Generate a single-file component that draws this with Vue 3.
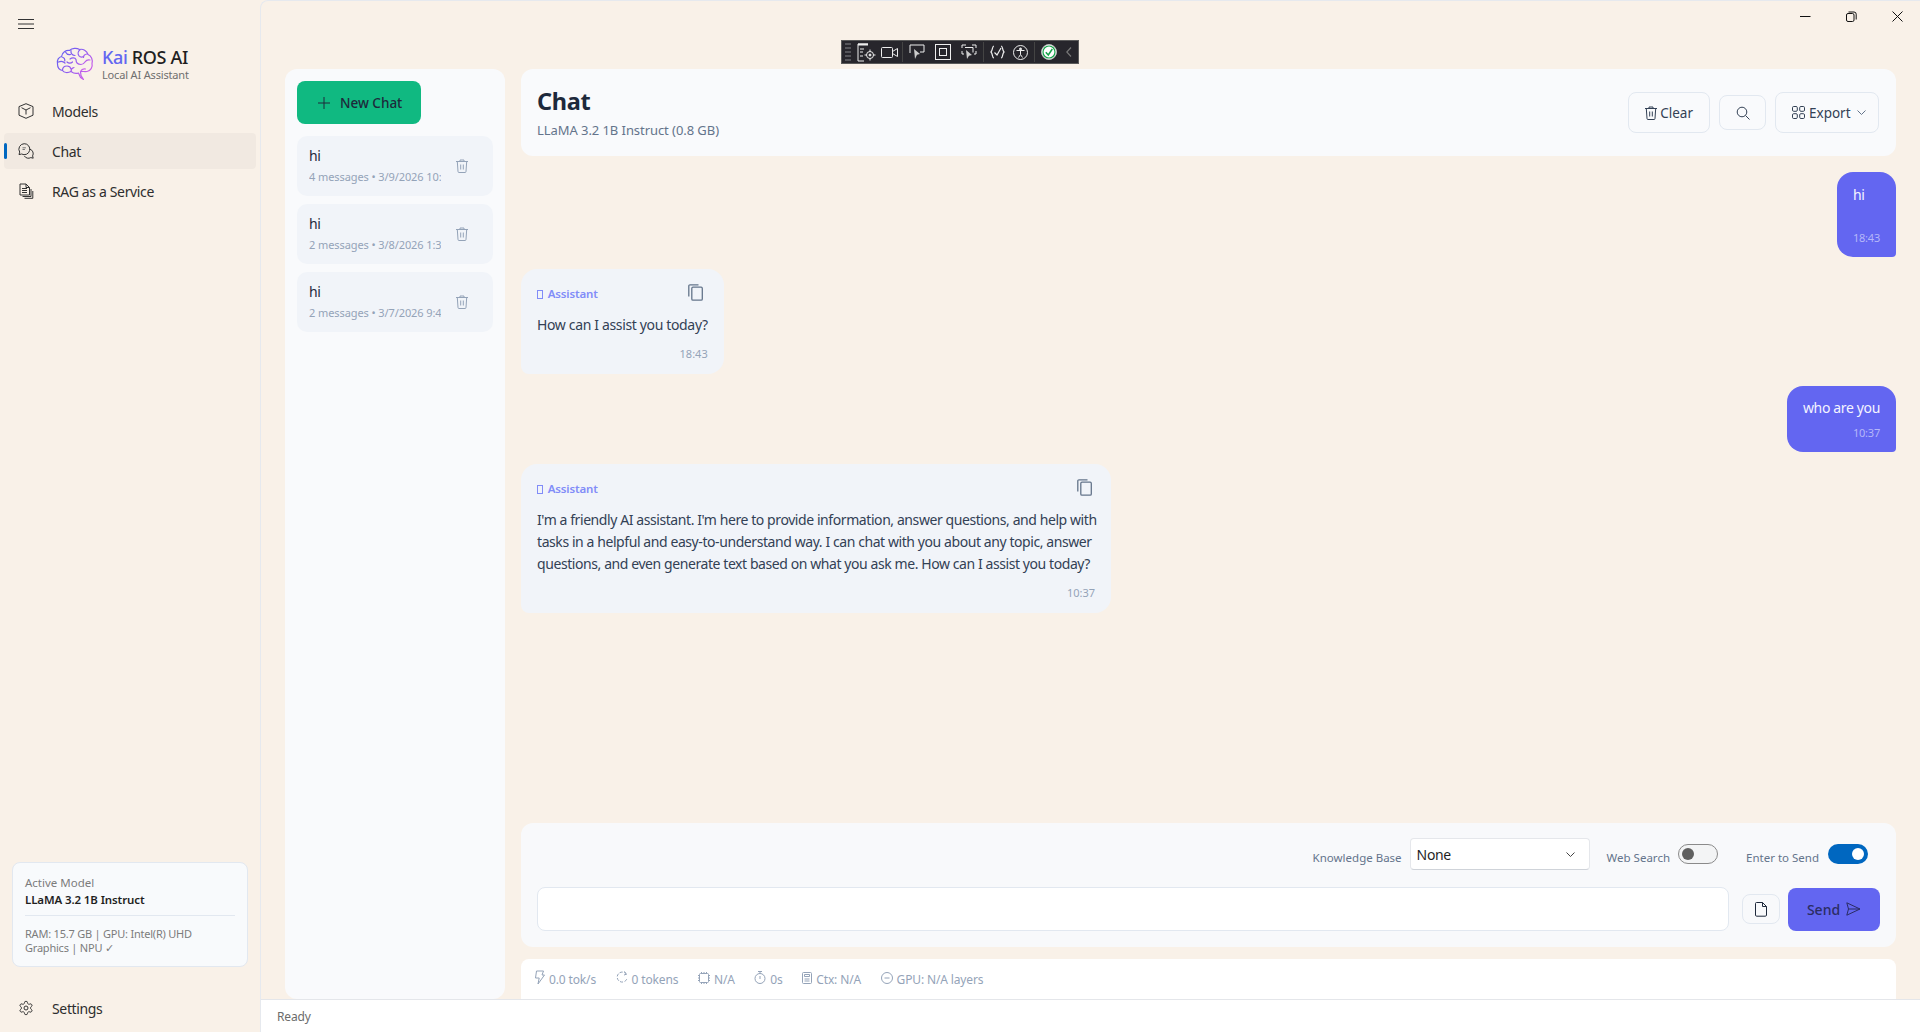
<script setup>
const sessions = [
  { id: 1, title: 'hi', meta: '4 messages • 3/9/2026 10:37 AM' },
  { id: 2, title: 'hi', meta: '2 messages • 3/8/2026 1:30 PM' },
  { id: 3, title: 'hi', meta: '2 messages • 3/7/2026 9:43 AM' },
]
</script>

<template>
  <div class="app">
    <aside class="sidebar">
      <button class="menu-btn" aria-label="Menu">
        <svg width="16" height="12" viewBox="0 0 16 12" fill="none" stroke="#333" stroke-width="1"><path d="M0 1.5h16M0 6h16M0 10.5h16"/></svg>
      </button>
      <div class="brand">
        <svg class="brain" width="38" height="34" viewBox="0 0 38 34" fill="none" stroke-width="1.2" stroke-linecap="round" stroke-linejoin="round">
          <defs>
            <linearGradient id="bg" x1="0" y1="0" x2="1" y2="0.7">
              <stop offset="0" stop-color="#5f63f2"/><stop offset="0.55" stop-color="#8e5cf0"/><stop offset="1" stop-color="#d060ea"/>
            </linearGradient>
          </defs>
          <path stroke="url(#bg)" d="M1.5 17C.5 13 3 10 5.5 9.500 6 5.500 10 3 13.500 3.500 16 .8 21 .8 23.500 2.500 27 1.500 31 4 32 7.500 35.500 9 37 13 36 16.500 37 20 34.500 24 31 24.500 28 25 26.500 24 24.500 24.500L25 28.500 27.500 32.500 24.500 30.500 22.500 26C20 27 17 26 15 24.500 12 26 8 26 6.500 23.500 3.500 23 1.500 20.500 1.500 17Z"/>
          <path stroke="url(#bg)" d="M6 10c2 .5 3 2 2.800 4M2.500 15c2-1 5-.5 6.500 1M9.500 5c1 2 3 3 5 2.500M14 12c2-1.500 5-1.500 6 .5M15 3.500c-.5 3 1.500 5 4 5M24 2.800c-2 1.500-2.500 4-1 6 1.500 1.800 4 1.500 5 0M31 7c-2 .3-3.500 1.500-3.500 3.500M20 12.500c0 3 2 5 5 5 2 0 3-1 4-2.500M34 13c-2-.5-4 .5-5 2M6.500 23.500c0-3 2-4.500 4.500-4.500 2 0 3.500 1 4 3M15 24.500c0-2 1-3.500 3-4M24.500 24.500c1-2 3-3 5-2.500M11 15c1.500 1.500 4 1.500 5.500 0"/>
        </svg>
        <div class="brand-text">
          <div class="brand-title"><span class="kai">Kai</span> ROS AI</div>
          <div class="brand-sub">Local AI Assistant</div>
        </div>
      </div>
      <nav class="nav">
        <a class="nav-item">
          <svg class="nav-icon" width="16" height="16" viewBox="0 0 16 16" fill="none" stroke="#333" stroke-width="1" stroke-linejoin="round"><path d="M8 .7l7 2.900v8.600l-7 3.100-7-3.100V3.600z"/><path d="M3.500 4.700L8 7l4.500-2.300M8 7v4.500"/></svg>
          <span>Models</span>
        </a>
        <a class="nav-item active">
          <span class="indicator"></span>
          <svg class="nav-icon" width="16" height="16" viewBox="0 0 16 16" fill="none" stroke="#333" stroke-width="1" stroke-linejoin="round"><path d="M6.200.7a5.500 5.500 0 1 1-2.600 10.300L1 11.600l.7-2.500A5.500 5.500 0 0 1 6.200.7z"/><path d="M11.900 6.200a4.600 4.600 0 0 1 2.700 6.700l.6 2.300-2.400-.6a4.700 4.700 0 0 1-6.400-1.600"/><path d="M4.500 4.800h3.400M4.500 6.500h2.400" stroke="#777"/></svg>
          <span>Chat</span>
        </a>
        <a class="nav-item">
          <svg class="nav-icon" width="16" height="16" viewBox="0 0 16 16" fill="none" stroke="#333" stroke-width="1" stroke-linejoin="round"><path d="M2 1h6l3.500 3.500V12H2z"/><path d="M8 1v3.500h3.500M4 5.500h5M4 7.500h5M4 9.500h5M13 6v7.500H4.500M14.800 8v7.300H6.500"/></svg>
          <span>RAG as a Service</span>
        </a>
      </nav>
      <div class="spacer"></div>
      <div class="model-card">
        <div class="mc-label">Active Model</div>
        <div class="mc-name">LLaMA 3.2 1B Instruct</div>
        <div class="mc-divider"></div>
        <div class="mc-info">RAM: 15.7 GB | GPU: Intel(R) UHD Graphics | NPU ✓</div>
      </div>
      <a class="nav-item settings">
        <svg class="nav-icon" width="16" height="16" viewBox="0 0 24 24" fill="none" stroke="#333" stroke-width="1.500"><path d="M12.220 2h-.44a2 2 0 0 0-2 2v.18a2 2 0 0 1-1 1.730l-.43.25a2 2 0 0 1-2 0l-.15-.08a2 2 0 0 0-2.730.73l-.22.38a2 2 0 0 0 .73 2.730l.15.1a2 2 0 0 1 1 1.720v.51a2 2 0 0 1-1 1.740l-.15.09a2 2 0 0 0-.73 2.730l.22.38a2 2 0 0 0 2.730.73l.15-.08a2 2 0 0 1 2 0l.43.25a2 2 0 0 1 1 1.730V20a2 2 0 0 0 2 2h.44a2 2 0 0 0 2-2v-.18a2 2 0 0 1 1-1.730l.43-.25a2 2 0 0 1 2 0l.15.08a2 2 0 0 0 2.730-.73l.22-.39a2 2 0 0 0-.73-2.730l-.15-.08a2 2 0 0 1-1-1.740v-.5a2 2 0 0 1 1-1.740l.15-.09a2 2 0 0 0 .73-2.730l-.22-.38a2 2 0 0 0-2.730-.73l-.15.08a2 2 0 0 1-2 0l-.43-.25a2 2 0 0 1-1-1.730V4a2 2 0 0 0-2-2z"/><circle cx="12" cy="12" r="3"/></svg>
        <span>Settings</span>
      </a>
    </aside>

    <main class="main">
      <div class="titlebar">
        <button class="win-btn" aria-label="Minimize"><svg width="11" height="11" viewBox="0 0 11 11" stroke="#111" fill="none"><path d="M0 5.500h10.500"/></svg></button>
        <button class="win-btn" aria-label="Restore"><svg width="11" height="11" viewBox="0 0 11 11" stroke="#111" fill="none"><rect x=".5" y="2.500" width="7.500" height="8" rx="1.500"/><path d="M2.500 1h5.500a2.200 2.200 0 0 1 2.200 2.200V8.500"/></svg></button>
        <button class="win-btn" aria-label="Close"><svg width="11" height="11" viewBox="0 0 11 11" stroke="#111" fill="none"><path d="M.5.500l10 10M10.500.500l-10 10"/></svg></button>
      </div>

      <div class="content">
        <section class="history">
          <button class="new-chat">
            <svg width="12" height="12" viewBox="0 0 12 12" stroke="#1e293b" fill="none"><path d="M6 0v12M0 6h12"/></svg>
            <span>New Chat</span>
          </button>
          <div v-for="s in sessions" :key="s.id" class="session">
            <div class="session-text">
              <div class="session-title">{{ s.title }}</div>
              <div class="session-meta">{{ s.meta }}</div>
            </div>
            <svg class="session-del" width="14" height="14" viewBox="0 0 14 14" fill="none" stroke="#94a3b8" stroke-width="1"><path d="M1 2.500h12M5 2.500V1h4v1.500M2.300 2.500l.7 10a1 1 0 0 0 1 1h6a1 1 0 0 0 1-1l.7-10M5.700 5.500v5M8.300 5.500v5"/></svg>
          </div>
        </section>

        <section class="chat">
          <header class="chat-header">
            <div class="chat-head-text">
              <h1>Chat</h1>
              <p>LLaMA 3.2 1B Instruct (0.8 GB)</p>
            </div>
            <div class="chat-actions">
              <button class="tool-btn clear">
                <svg width="14" height="14" viewBox="0 0 14 14" fill="none" stroke="#334155" stroke-width="1"><path d="M1 2.500h12M5 2.500V1h4v1.500M2.300 2.500l.7 10a1 1 0 0 0 1 1h6a1 1 0 0 0 1-1l.7-10M5.700 5.500v5M8.300 5.500v5"/></svg>
                <span>Clear</span>
              </button>
              <button class="tool-btn icon-only">
                <svg width="14" height="14" viewBox="0 0 14 14" fill="none" stroke="#334155" stroke-width="1"><circle cx="6" cy="6" r="4.800"/><path d="M9.500 9.500l4 4"/></svg>
              </button>
              <button class="tool-btn export">
                <svg width="13" height="13" viewBox="0 0 13 13" fill="none" stroke="#334155" stroke-width="1"><rect x=".5" y=".5" width="4.800" height="4.800" rx="1.200"/><rect x="7.700" y=".5" width="4.800" height="4.800" rx="1.200"/><rect x=".5" y="7.700" width="4.800" height="4.800" rx="1.200"/><rect x="7.700" y="7.700" width="4.800" height="4.800" rx="1.200"/></svg>
                <span>Export</span>
                <svg class="chev" width="9" height="5" viewBox="0 0 9 5" fill="none" stroke="#64748b"><path d="M.5.500l4 4 4-4"/></svg>
              </button>
            </div>
          </header>

          <div class="messages">
            <div class="bubble user tall">
              <div class="msg-text">hi</div>
              <div class="msg-time">18:43</div>
            </div>
            <div class="bubble bot">
              <div class="bot-head">
                <span class="bot-label"><i class="tofu"></i> Assistant</span>
                <svg class="copy" width="15" height="17" viewBox="0 0 15 17" fill="none" stroke="#64748b" stroke-width="1.300"><rect x="3.800" y="3.200" width="10.500" height="13" rx="1.200"/><path d="M.8 12.500V2A1.200 1.200 0 0 1 2 .8h8.500"/></svg>
              </div>
              <div class="msg-text">How can I assist you today?</div>
              <div class="msg-time">18:43</div>
            </div>
            <div class="bubble user">
              <div class="msg-text">who are you</div>
              <div class="msg-time">10:37</div>
            </div>
            <div class="bubble bot wide">
              <div class="bot-head">
                <span class="bot-label"><i class="tofu"></i> Assistant</span>
                <svg class="copy" width="15" height="17" viewBox="0 0 15 17" fill="none" stroke="#64748b" stroke-width="1.300"><rect x="3.800" y="3.200" width="10.500" height="13" rx="1.200"/><path d="M.8 12.500V2A1.200 1.200 0 0 1 2 .8h8.500"/></svg>
              </div>
              <div class="msg-text">I'm a friendly AI assistant. I'm here to provide information, answer questions, and help with tasks in a helpful and easy-to-understand way. I can chat with you about any topic, answer questions, and even generate text based on what you ask me. How can I assist you today?</div>
              <div class="msg-time">10:37</div>
            </div>
          </div>

          <div class="composer">
            <div class="options">
              <label class="opt-label">Knowledge Base</label>
              <div class="select">
                <span>None</span>
                <svg width="9" height="5" viewBox="0 0 9 5" fill="none" stroke="#444"><path d="M.5.500l4 4 4-4"/></svg>
              </div>
              <label class="opt-label ws">Web Search</label>
              <span class="toggle off"><i></i></span>
              <label class="opt-label es">Enter to Send</label>
              <span class="toggle on"><i></i></span>
            </div>
            <div class="input-row">
              <div class="text-input"></div>
              <button class="attach">
                <svg width="12" height="15" viewBox="0 0 12 15" fill="none" stroke="#1e293b" stroke-width="1"><path d="M1.500.5h6l4 4v8.500a1.200 1.200 0 0 1-1.200 1.200H1.700A1.200 1.200 0 0 1 .5 13V1.500a1 1 0 0 1 1-1z"/><path d="M7.500.5v4h4" /></svg>
              </button>
              <button class="send">
                <span>Send</span>
                <svg width="15" height="14" viewBox="0 0 15 14" fill="none" stroke="#2b2d63" stroke-width="1"><path d="M.8.800L14 7 .8 13.200 2.500 7zM2.500 7H14"/></svg>
              </button>
            </div>
          </div>

          <div class="stats">
            <span class="stat"><svg width="11" height="15" viewBox="0 0 11 15" fill="none" stroke="#94a3b8"><path d="M2.500 1h7L8 5h2.500L4 14l1.200-6H1.500z"/></svg>0.0 tok/s</span>
            <span class="stat"><svg width="12" height="13" viewBox="0 0 12 13" fill="none" stroke="#94a3b8" stroke-dasharray="3 1.500"><path d="M10.500 3.500A5 5 0 1 0 11 7.500M8 .5l3 2.500-3 1"/></svg>0 tokens</span>
            <span class="stat"><svg width="12" height="12" viewBox="0 0 12 12" fill="none" stroke="#94a3b8"><rect x="1.500" y="1.500" width="9" height="9" rx="1"/><path d="M3.500 0v1.500M6 0v1.500M8.500 0v1.500M3.500 10.500V12M6 10.500V12M8.500 10.500V12M0 3.500h1.500M0 6h1.500M0 8.500h1.500M10.500 3.500H12M10.500 6H12M10.500 8.500H12"/></svg>N/A</span>
            <span class="stat"><svg width="12" height="13" viewBox="0 0 12 13" fill="none" stroke="#94a3b8"><circle cx="6" cy="7.500" r="5"/><path d="M4 .5h4M6 .5v2M6 5v3"/></svg>0s</span>
            <span class="stat"><svg width="10" height="12" viewBox="0 0 10 12" fill="none" stroke="#94a3b8"><rect x=".5" y=".5" width="9" height="11" rx="1"/><path d="M2.500 2.500h5v2h-5zM2.500 7h5M2.500 9h5"/></svg>Ctx: N/A</span>
            <span class="stat"><svg width="12" height="12" viewBox="0 0 12 12" fill="none" stroke="#94a3b8"><circle cx="6" cy="6" r="5.500"/><path d="M3.500 6h5"/></svg>GPU: N/A layers</span>
          </div>
        </section>
      </div>

      <footer class="statusbar">Ready</footer>

      <div class="dev-toolbar">
        <span class="grip"></span>
        <svg width="20" height="19" viewBox="0 0 20 19" fill="none" stroke="#eee"><path d="M1 1h10M1 1v17h6M3 6h4M3 9h3M3 13h3"/><path d="M1 1.500h10" stroke-width="2"/><circle cx="13" cy="12" r="3.500"/><circle cx="13" cy="12" r="1" fill="#eee"/><path d="M13 6.500v2M13 15.500v2M7.500 12h2M16.500 12h2"/></svg>
        <svg class="gap-a" width="17" height="11" viewBox="0 0 17 11" fill="none" stroke="#eee"><rect x=".5" y=".5" width="11" height="10" rx="1"/><path d="M11.500 4.500L16.500 1.500v8l-5-3"/></svg>
        <span class="sep"></span>
        <svg width="16" height="16" viewBox="0 0 16 16" fill="none" stroke="#eee"><path d="M1 9V1h14v7h-4"/><path d="M5 5l6 5-3 .7L6 15z" fill="#ccc" stroke="none"/></svg>
        <svg class="gap-b" width="16" height="16" viewBox="0 0 16 16" fill="none" stroke="#eee"><rect x=".5" y=".5" width="15" height="15"/><rect x="4.500" y="4.500" width="7" height="7"/></svg>
        <svg class="gap-b" width="16" height="16" viewBox="0 0 16 16" fill="none" stroke="#eee"><path d="M1 4V1h4M11 1h4v3M1 7v3h2M15 7v3h-2M4 3.500h8v5"/><path d="M5 6l6 5-3 .7L6 15z" fill="#ccc" stroke="none"/></svg>
        <span class="sep"></span>
        <svg width="15" height="14" viewBox="0 0 15 14" fill="none" stroke="#eee" stroke-width="1.200"><path d="M4 1C2 1 3 5 1 7 3 9 2 13 4 13M11 1c2 0 1 4 3 6-2 2-1 6-3 6"/><path d="M4.500 7.500l2.500 2.500L11 3"/></svg>
        <svg class="gap-c" width="15" height="15" viewBox="0 0 15 15" fill="none" stroke="#eee"><circle cx="7.500" cy="7.500" r="7"/><circle cx="7.500" cy="4" r="1" fill="#eee"/><path d="M3.500 5.500h8M7.500 5.500v4M7.500 9.500l-2 3M7.500 9.500l2 3"/></svg>
        <span class="sep"></span>
        <svg width="16" height="16" viewBox="0 0 16 16" fill="none"><circle cx="8" cy="8" r="7.500" fill="#fff" stroke="#bbb"/><circle cx="8" cy="8" r="6" stroke="#16a34a" stroke-width="1.200"/><path d="M4.800 8.300L7.300 11l4-6" stroke="#16a34a" stroke-width="1.500"/></svg>
        <svg class="collapse" width="6" height="10" viewBox="0 0 6 10" fill="none" stroke="#777" stroke-width="1.200"><path d="M5 .5L.8 5 5 9.500"/></svg>
      </div>
    </main>
  </div>
</template>

<style>
html, body { margin: 0; padding: 0; }
</style>

<style scoped>
* { box-sizing: border-box; }
button { font: inherit; border: none; background: none; padding: 0; color: inherit; }
.app {
  display: flex;
  width: 1920px;
  height: 1032px;
  overflow: hidden;
  background: #f9f1e8;
  font-family: "Noto Sans", "Open Sans", sans-serif;
  font-size: 14px;
  letter-spacing: -0.025em;
  color: #1e293b;
}

/* Sidebar */
.sidebar {
  width: 260px;
  flex: none;
  display: flex;
  flex-direction: column;
  padding: 18px 4px 6px;
}
.menu-btn { display: flex; width: 16px; height: 12px; margin-left: 14px; }
.brand { display: flex; align-items: center; gap: 8px; margin: 17px 0 0 52px; height: 34px; }
.brand-title { font-size: 18px; line-height: 20px; font-weight: 500; color: #1f1f1f; }
.kai { color: #6366f1; }
.brand-sub { font-size: 11px; line-height: 15px; color: #6f6f6f; letter-spacing: -0.015em; }
.nav { display: flex; flex-direction: column; gap: 4px; margin-top: 12px; }
.nav-item {
  position: relative;
  display: flex;
  align-items: center;
  height: 36px;
  padding-left: 14px;
  border-radius: 4px;
  color: #2e2e2e;
  font-size: 14px;
}
.nav-icon { flex: none; margin-right: 18px; }
.nav-item.active { background: #f1e9e1; }
.indicator {
  position: absolute;
  left: 0;
  top: 10px;
  width: 3px;
  height: 16px;
  border-radius: 2px;
  background: #0067c0;
}
.spacer { flex: 1; }
.model-card {
  margin: 0 8px;
  height: 105px;
  padding: 12px 12px;
  background: #f8fafc;
  border: 1px solid #e2e8f0;
  border-radius: 8px;
}
.mc-label { font-size: 11.500px; line-height: 16px; color: #7c7c7c; letter-spacing: 0; }
.mc-name { font-size: 11.500px; line-height: 18px; font-weight: 600; color: #1f1f1f; letter-spacing: -0.01em; }
.mc-divider { height: 1px; margin: 6px 0 11px; background: #e2e8f0; }
.mc-info { font-size: 11px; line-height: 14px; color: #7c7c7c; letter-spacing: -0.02em; }
.settings { margin-top: 23px; }

/* Main */
.main {
  position: relative;
  flex: 1;
  min-width: 0;
  display: flex;
  flex-direction: column;
  border-left: 1px solid #e6e9ee;
  border-top: 1px solid #e6e9ee;
  border-top-left-radius: 8px;
}
.titlebar {
  height: 68px;
  flex: none;
  display: flex;
  justify-content: flex-end;
  gap: 35px;
  padding: 10px 17px 0 0;
}
.win-btn { display: flex; width: 11px; height: 11px; }
.content { flex: 1; min-height: 0; display: flex; gap: 16px; padding: 0 24px 0 24px; }

.history {
  width: 220px;
  flex: none;
  display: flex;
  flex-direction: column;
  align-items: flex-start;
  gap: 8px;
  padding: 12px;
  background: #f9fafc;
  border-radius: 12px;
}
.new-chat {
  display: flex;
  align-items: center;
  gap: 10px;
  width: 124px;
  height: 43px;
  margin-bottom: 4px;
  padding-left: 21px;
  background: #10b981;
  border-radius: 8px;
  font-weight: 500;
  font-size: 13.500px;
  color: #1e293b;
}
.session {
  width: 196px;
  height: 60px;
  display: flex;
  align-items: center;
  padding: 0 24px 0 12px;
  background: #f1f4f9;
  border-radius: 10px;
}
.session-text { width: 132px; margin-top: -2px; overflow: hidden; white-space: nowrap; }
.session-title { font-size: 14px; line-height: 20px; color: #1e293b; }
.session-meta { font-size: 11px; line-height: 16px; margin-top: 3px; color: #94a3b8; letter-spacing: -0.008em; }
.session-del { margin-left: auto; }

.chat { flex: 1; min-width: 0; display: flex; flex-direction: column; }
.chat-header {
  height: 87px;
  flex: none;
  display: flex;
  align-items: center;
  justify-content: space-between;
  padding: 0 17px 0 16px;
  background: #f9fafc;
  border-radius: 12px;
}
.chat-head-text h1 { margin: -1px 0 0; font-size: 23.500px; line-height: 32px; font-weight: 700; color: #1e293b; }
.chat-head-text p { margin: 4px 0 0; font-size: 13px; line-height: 18px; color: #64748b; letter-spacing: -0.005em; }
.chat-actions { display: flex; align-items: center; gap: 9px; }
.tool-btn {
  display: flex;
  align-items: center;
  gap: 4px;
  height: 41px;
  padding: 0 16px 0 15px;
  border: 1px solid #e2e8f0;
  border-radius: 8px;
  font-size: 13.500px;
  color: #334155;
}
.tool-btn.clear { gap: 2px; }
.tool-btn.icon-only { height: 35px; width: 47px; padding: 0; justify-content: center; }
.tool-btn.export { width: 104px; padding: 0 0 0 16px; }
.chev { margin-left: 2px; }

.messages {
  flex: 1;
  min-height: 0;
  display: flex;
  flex-direction: column;
  align-items: flex-start;
  gap: 12px;
  padding-top: 16px;
}
.bubble { border-radius: 16px; }
.bubble.user {
  align-self: flex-end;
  padding: 11px 16px 12px;
  background: #6366f1;
  color: #f4f4ff;
  border-bottom-right-radius: 4px;
}
.bubble.user .msg-time { margin-top: 7px; color: #b5b7f9; letter-spacing: -0.02em; }
.bubble.tall { height: 85px; padding-top: 12px; }
.bubble.user.tall .msg-time { margin-top: 25px; }
.bubble.bot { padding: 14px 16px 13px; background: #f1f4f9; border-bottom-left-radius: 8px; color: #334155; }
.bubble.wide { width: 590px; padding-right: 8px; }
.bubble.wide .msg-text { letter-spacing: -0.03em; }
.bubble.wide .msg-time { margin-right: 8px; }
.bubble.wide .copy { margin-right: 11px; }
.bot-head { display: flex; align-items: center; justify-content: space-between; gap: 24px; height: 18px; margin: 1px 0 12px; }
.bot-label { font-size: 11.500px; font-weight: 600; color: #818cf8; letter-spacing: -0.015em; }
.tofu {
  display: inline-block;
  width: 6px;
  height: 9px;
  margin-right: 2px;
  border: 1px solid #818cf8;
  vertical-align: -1px;
}
.copy { margin: -2px 5px 0 0; }
.msg-text { font-size: 14px; line-height: 22px; }
.msg-time { margin-top: 11px; font-size: 11px; line-height: 14px; text-align: right; color: #94a3b8; letter-spacing: 0; }

.composer {
  flex: none;
  height: 124px;
  padding: 15px 16px 0;
  background: #f8f9fb;
  border-radius: 12px;
}
.options { display: flex; align-items: center; justify-content: flex-end; height: 32px; padding-right: 12px; }
.opt-label { font-size: 11.500px; color: #64748b; letter-spacing: 0; margin-top: 6px; }
.opt-label.ws { margin-left: 17px; margin-right: 8px; }
.opt-label.es { margin-left: 28px; margin-right: 9px; }
.select {
  display: flex;
  align-items: center;
  justify-content: space-between;
  width: 180px;
  height: 32px;
  margin-left: 8px;
  padding: 0 14px 0 6px;
  background: #fff;
  border: 1px solid #e5e7eb;
  border-bottom-color: #cfd3d9;
  border-radius: 4px;
  font-size: 14px;
  color: #1f1f1f;
}
.toggle {
  display: flex;
  align-items: center;
  width: 40px;
  height: 20px;
  padding: 0 4px;
  border-radius: 10px;
}
.toggle i { display: block; border-radius: 50%; width: 12px; height: 12px; }
.toggle.off { background: #f3f4f5; border: 1px solid #8a8a8a; padding: 0 3px; }
.toggle.off i { background: #5f5f5f; }
.toggle.on { background: #0067c0; justify-content: flex-end; }
.toggle.on i { background: #fff; }

.input-row { display: flex; align-items: center; margin-top: 17px; }
.text-input {
  flex: 1;
  height: 44px;
  background: #fff;
  border: 1px solid #e2e8f0;
  border-radius: 8px;
}
.attach {
  width: 38px;
  height: 30px;
  margin-left: 13px;
  display: flex;
  align-items: center;
  justify-content: center;
  border: 1px solid #e2e8f0;
  border-radius: 8px;
}
.send {
  width: 92px;
  height: 43px;
  margin-left: 8px;
  display: flex;
  align-items: center;
  justify-content: center;
  gap: 6px;
  background: #6366f1;
  border-radius: 8px;
  font-weight: 500;
  color: #2b2d63;
}

.stats {
  flex: none;
  height: 40px;
  margin-top: 12px;
  display: flex;
  align-items: center;
  gap: 19.600px;
  padding: 0 13px;
  background: #fff;
  border-radius: 8px 8px 0 0;
}
.stat { display: flex; align-items: center; gap: 4px; font-size: 12px; color: #94a3b8; letter-spacing: -0.012em; }
.stat svg { margin-top: -3px; }

.statusbar {
  flex: none;
  height: 33px;
  display: flex;
  align-items: center;
  padding-left: 16px;
  background: #fff;
  border-top: 1px solid #e4e6ea;
  font-size: 12px;
  color: #6b6b6b;
  letter-spacing: -0.01em;
}

.dev-toolbar {
  position: absolute;
  left: 580px;
  top: 39px;
  width: 238px;
  height: 24px;
  display: flex;
  align-items: center;
  background: #27262c;
  border: 1px solid #5a5a5a;
  padding-left: 3px;
}
.grip {
  width: 6px;
  height: 18px;
  margin-right: 6px;
  background: repeating-linear-gradient(to bottom, #55555a 0 2px, transparent 2px 4px);
}
.sep { width: 1px; height: 20px; background: #444; margin: 0 6px; }
.gap-a { margin: 0 -2px 0 4px; }
.gap-b { margin-left: 10px; }
.gap-c { margin-left: 8px; }
.collapse { margin-left: 9px; }
</style>
